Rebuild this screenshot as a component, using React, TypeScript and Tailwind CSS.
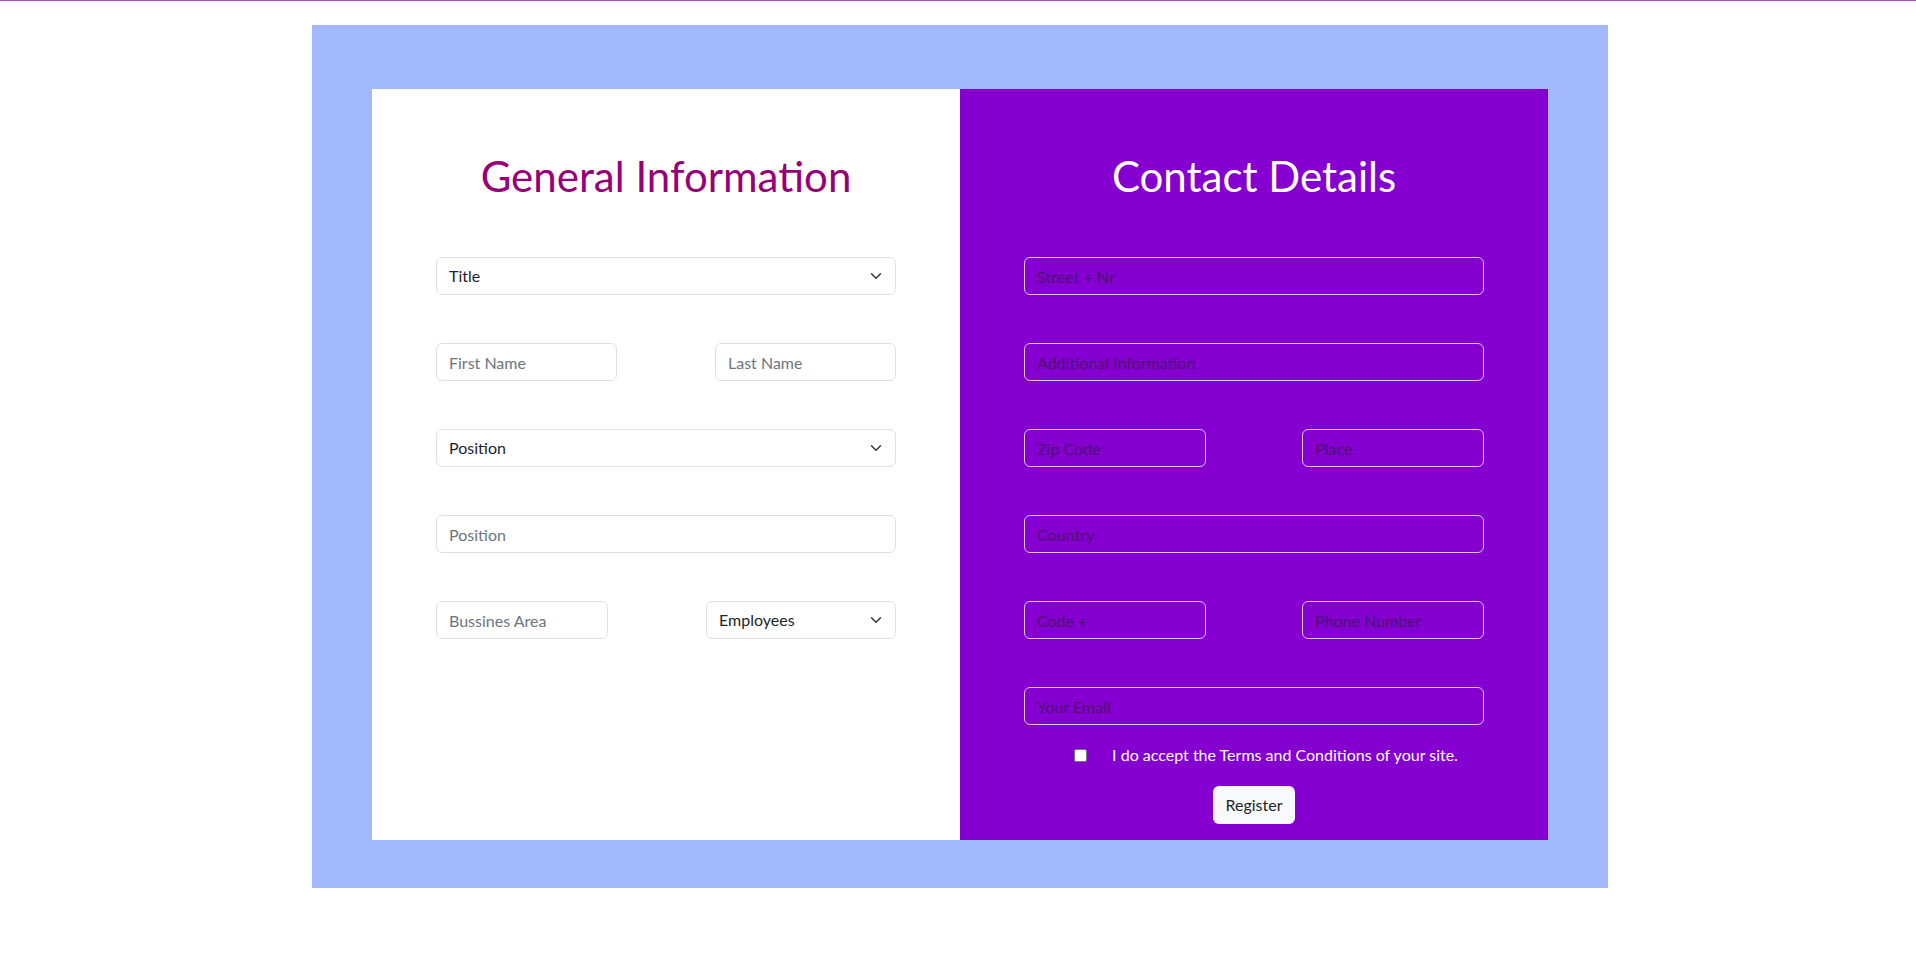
import type { ReactNode } from 'react';

// Bootstrap-like chevron used by the select boxes
function Chevron() {
  return (
    <svg
      className="pointer-events-none absolute right-[12px] top-1/2 -translate-y-1/2"
      width="16"
      height="12"
      viewBox="0 0 16 16"
      fill="none"
      stroke="#343a40"
      strokeWidth="2"
      strokeLinecap="round"
      strokeLinejoin="round"
    >
      <path d="m2 5 6 6 6-6" />
    </svg>
  );
}

function LightInput({ placeholder, className = 'w-full' }: { placeholder: string; className?: string }) {
  return (
    <input
      type="text"
      placeholder={placeholder}
      className={`${className} h-[38px] rounded-[6px] border border-[#dee2e6] bg-white px-[12px] text-[16px] leading-[24px] text-[#212529] outline-none placeholder:text-[#6c757d]`}
    />
  );
}

function LightSelect({ label, className = 'w-full' }: { label: string; className?: string }) {
  return (
    <div className={`${className} relative`}>
      <select
        defaultValue=""
        className="h-[38px] w-full appearance-none rounded-[6px] border border-[#dee2e6] bg-white pl-[12px] pr-[36px] text-[16px] leading-[24px] text-[#212529] outline-none"
      >
        <option value="">{label}</option>
      </select>
      <Chevron />
    </div>
  );
}

function DarkInput({ placeholder, className = 'w-full' }: { placeholder: string; className?: string }) {
  return (
    <input
      type="text"
      placeholder={placeholder}
      className={`${className} h-[38px] rounded-[6px] border border-[#dcc4f1] bg-transparent px-[12px] text-[16px] leading-[24px] text-white outline-none placeholder:text-[#4c1470]`}
    />
  );
}

function Row({ children }: { children: ReactNode }) {
  return <div className="flex justify-between">{children}</div>;
}

export default function App() {
  return (
    <div className="min-h-screen bg-white [font-family:Lato,'Noto_Sans',sans-serif]">
      <div className="h-px bg-[#a452c4]" />

      <div className="mt-[24px] flex justify-center pl-[4px]">
        <div className="w-[1296px] bg-[#a3b9fe] px-[60px] pb-[48px] pt-[64px]">
          <div className="flex">
            {/* General information */}
            <div className="w-[588px] bg-white px-[64px] pt-[63px]">
              <h2 className="mb-[57px] text-center text-[42px] leading-[48px] text-[#960078]">General Information</h2>
              <div className="flex flex-col gap-[48px]">
                <LightSelect label="Title" />
                <Row>
                  <LightInput placeholder="First Name" className="w-[181px]" />
                  <LightInput placeholder="Last Name" className="w-[181px]" />
                </Row>
                <LightSelect label="Position" />
                <LightInput placeholder="Position" />
                <Row>
                  <LightInput placeholder="Bussines Area" className="w-[172px]" />
                  <LightSelect label="Employees" className="w-[190px]" />
                </Row>
              </div>
            </div>

            {/* Contact details */}
            <div className="w-[588px] bg-[#8500d0] px-[64px] pb-[16px] pt-[63px]">
              <h2 className="mb-[57px] text-center text-[42px] leading-[48px] text-white">Contact Details</h2>
              <div className="flex flex-col gap-[48px]">
                <DarkInput placeholder="Street + Nr" />
                <DarkInput placeholder="Additional Information" />
                <Row>
                  <DarkInput placeholder="Zip Code" className="w-[182px]" />
                  <DarkInput placeholder="Place" className="w-[182px]" />
                </Row>
                <DarkInput placeholder="Country" />
                <Row>
                  <DarkInput placeholder="Code +" className="w-[182px]" />
                  <DarkInput placeholder="Phone Number" className="w-[182px]" />
                </Row>
                <DarkInput placeholder="Your Email" />
              </div>

              <label className="mt-[18px] flex h-[24px] items-center justify-center pl-[24px] text-[16px] text-white">
                <input
                  type="checkbox"
                  className="h-[13px] w-[13px] appearance-none rounded-[2px] border border-[#767676] bg-white"
                />
                <span className="ml-[25px]">I do accept the Terms and Conditions of your site.</span>
              </label>

              <div className="mt-[19px] flex justify-center">
                <button
                  type="button"
                  className="h-[38px] rounded-[6px] bg-[#f8f9fa] px-[12px] text-[16px] leading-[24px] text-[#212529]"
                >
                  Register
                </button>
              </div>
            </div>
          </div>
        </div>
      </div>
    </div>
  );
}
